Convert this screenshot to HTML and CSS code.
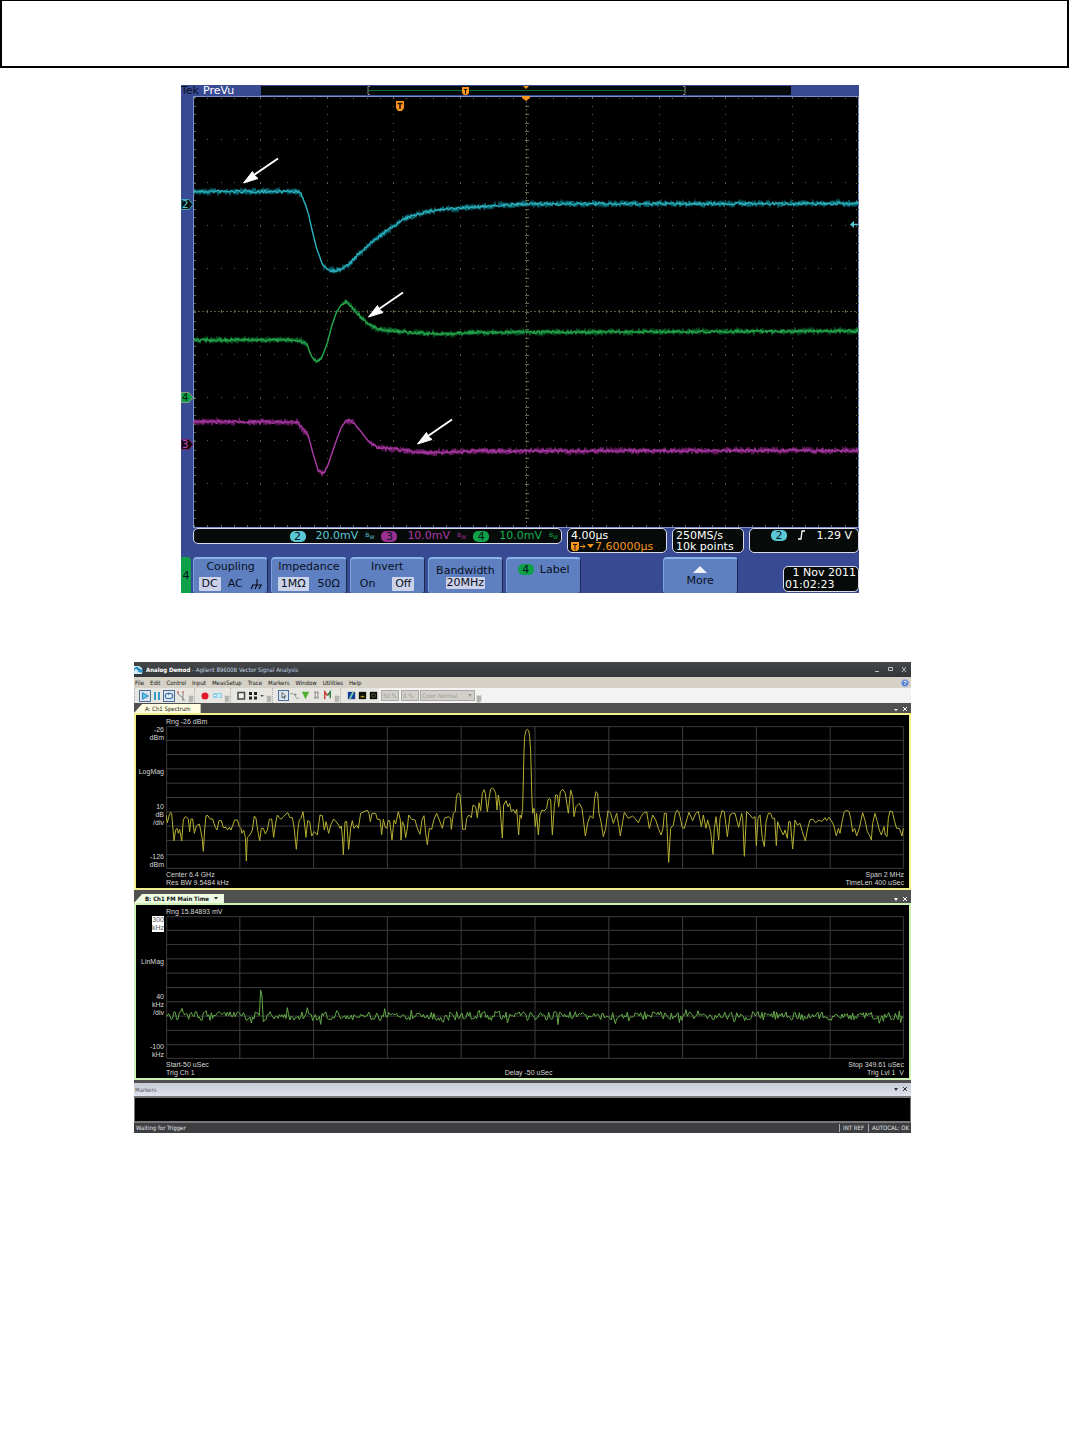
FILE: index.html
```html
<!DOCTYPE html>
<html lang="en">
<head>
<meta charset="utf-8">
<title>Instrument captures</title>
<link rel="stylesheet" href="styles.css">
</head>
<body>
<header class="banner"></header>
<main>
<section class="scope" aria-label="Oscilloscope">
  <div class="scope-top">
    <b class="tek">Tek</b><span class="state">PreVu</span>
    <div class="record">
      <svg viewBox="0 0 530 9" preserveAspectRatio="none">
        <path d="M107 4.500H424" stroke="#0b6b35"/>
        <path d="M109 .5H107V8.500H109M422 .5H424V8.500H422" fill="none" stroke="#8a8482"/>
        <path d="M201 1H208V7L206 9H203L201 7Z" fill="#f7941e"/>
        <path d="M203 3.500H206M204.500 3V8" stroke="#201000"/>
        <path d="M262 0H268L265 3Z" fill="#f7941e"/>
      </svg>
    </div>
  </div>
  <svg class="scope-plot" viewBox="0 0 678 432">
    <rect width="678" height="432" fill="#394a94"/>
    <rect x="12.500" y=".5" width="665" height="431" fill="#000" stroke="#7b93cf"/>
    <g id="graticule"></g>
    <g id="traces"></g>
    <path d="M341 0H349V2L345 5L341 2Z" fill="#f7941e"/>
    <path d="M215 5H223V12L221 15H217L215 12Z" fill="#f7941e"/>
    <path d="M216.500 7.500H221.500M219 7V13" stroke="#201000" stroke-width="1.500"/>
    <path d="M677 128.500H672" stroke="#5bc8d8" stroke-width="1.500"/><path d="M669 128.500L673 125V132Z" fill="#5bc8d8"/>
    <g fill="#fff" stroke="#fff">
      <g id="arrow"><path d="M97 62.500L73 79" stroke-width="2"/><path d="M62.500 87L71.500 75.500L73 79L77 82.500Z"/></g>
      <use href="#arrow" x="125" y="134"/>
      <use href="#arrow" x="174" y="261"/>
    </g>
    <g class="ch">
      <path d="M0 103.500H8L12 108.500L8 113.500H0Z" fill="#0a1416" stroke="#3ea9b9"/><text x="1" y="112" fill="#5bc8d8">2</text>
      <path d="M0 296.500H8L12 301.500L8 306.500H0Z" fill="#0fa14a" stroke="#8a9a80"/><text x="1" y="305" fill="#03200c">4</text>
      <path d="M0 343.500H8L12 348.500L8 353.500H0Z" fill="#14060f" stroke="#7a2470"/><text x="1" y="352" fill="#c050b8">3</text>
    </g>
  </svg>
  <div class="readouts">
    <div class="box channels">
      <span class="pill cyan">2</span><span class="c-cyan">20.0mV</span><small class="c-cyan">B<sub>W</sub></small>
      <span class="pill purple">3</span><span class="c-purple">10.0mV</span><small class="c-purple">B<sub>W</sub></small>
      <span class="pill green">4</span><span class="c-green">10.0mV</span><small class="c-green">B<sub>W</sub></small>
    </div>
    <div class="box time"><div>4.00µs</div>
      <div class="delay"><svg width="24" height="9" viewBox="0 0 24 9"><path d="M0 0H8V7L6 9H2L0 7Z" fill="#f7941e"/><path d="M2 2.500H6M4 2V8" stroke="#201000"/><path d="M9 4.500H14M12 2.500L14 4.500L12 6.500" fill="none" stroke="#f7941e"/><path d="M16 2H23L19.500 6Z" fill="#f7941e"/></svg>7.60000µs</div></div>
    <div class="box rate"><div>250MS/s</div><div>10k points</div></div>
    <div class="box trigger"><span class="pill cyan">2</span>
      <svg width="10" height="10" viewBox="0 0 10 10"><path d="M1 9H4L5 1H8" fill="none" stroke="#fff" stroke-width="1.300"/></svg><span>1.29 V</span></div>
  </div>
  <div class="softkeys">
    <span class="tab4">4</span>
    <button class="key"><span>Coupling</span><span class="opts"><mark>DC</mark><i>AC</i><svg width="13" height="11" viewBox="0 0 13 11"><path d="M7 0V6M2 6H12M3 6L1 10M7 6L5 10M11 6L9 10" fill="none" stroke="#0a1024" stroke-width="1.200"/></svg></span></button>
    <button class="key"><span>Impedance</span><span class="opts"><mark>1MΩ</mark><i>50Ω</i></span></button>
    <button class="key"><span>Invert</span><span class="opts"><i>On</i><mark>Off</mark></span></button>
    <button class="key mid"><span>Bandwidth</span><mark>20MHz</mark></button>
    <button class="key label"><span class="pill green">4</span><span>Label</span></button>
    <span></span>
    <button class="key more"><svg width="14" height="7" viewBox="0 0 14 7"><path d="M7 0L14 7H0Z" fill="#eef0fa"/></svg><span>More</span></button>
    <div class="box date"><div>1 Nov 2011</div><div>01:02:23</div></div>
  </div>
</section>

<section class="vsa" aria-label="Vector signal analysis">
  <div class="title">
    <svg width="9" height="10" viewBox="0 0 9 10"><path d="M0 1H5L8 3V9H0Z" fill="#cfeaf5"/><path d="M0 4Q2 0 5 3T9 4V7Q6 10 4 6T0 6Z" fill="#2b8fc4"/><path d="M4 8H8" stroke="#e8f4fa"/></svg>
    <span class="name"><b>Analog Demod</b> - Agilent 89600B Vector Signal Analysis</span>
    <svg class="winbtns" width="31" height="7" viewBox="0 0 31 7"><path d="M0 5.500H4M13.500 1.500H17.500V4.500H13.500ZM27 1L31 6M31 1L27 6" fill="none" stroke="#c0c0c0"/></svg>
  </div>
  <nav class="menu">
    <a href="#">File</a><a href="#">Edit</a><a href="#">Control</a><a href="#">Input</a><a href="#">MeasSetup</a><a href="#">Trace</a><a href="#">Markers</a><a href="#">Window</a><a href="#">Utilities</a><a href="#">Help</a>
    <svg class="help" width="8" height="8" viewBox="0 0 8 8"><circle cx="4" cy="4" r="3.500" fill="#4a72c8" stroke="#9db4e4"/><path d="M2.500 3Q4 1 5.500 3L4 4.500V6" fill="none" stroke="#fff"/></svg>
  </nav>
  <div class="toolbar">
    <div class="group">
      <button class="on" aria-label="Run"><svg viewBox="0 0 12 12"><path d="M3 2L10 6L3 10Z" fill="#5fc4ee" stroke="#1c78b8"/></svg></button>
      <button aria-label="Pause"><svg viewBox="0 0 12 12"><path d="M4 2V10M8 2V10" stroke="#3a9cc4" stroke-width="2"/></svg></button>
      <button class="on" aria-label="Repeat"><svg viewBox="0 0 12 12"><rect x="1.500" y="3" width="9" height="6" rx="3" fill="#dcebf8" stroke="#3a6ea8" stroke-width="1.300"/><path d="M5 1.500L8 3L5 5" fill="#3a6ea8"/></svg></button>
      <button aria-label="Sweep"><svg viewBox="0 0 12 12"><path d="M3 2V4L8 8V10M8 2V10M7 10H10" fill="none" stroke="#8a8a8a"/><path d="M2 2H4M7 2H9" stroke="#c44"/></svg></button>
      <span class="chip"></span>
    </div>
    <div class="group">
      <button aria-label="Record"><svg viewBox="0 0 12 12"><circle cx="6" cy="6" r="3.500" fill="#e0182c"/></svg></button>
      <button aria-label="Playback"><svg viewBox="0 0 12 12"><rect x="2" y="3" width="9" height="5" fill="#8ed0ea"/><path d="M3 5.500H5M7 4V8M9 4V7" stroke="#fff"/></svg></button>
      <span class="chip"></span>
    </div>
    <div class="group">
      <button aria-label="Single"><svg viewBox="0 0 12 12"><rect x="3" y="2.500" width="6.500" height="6.500" fill="#eee" stroke="#444" stroke-width="1.500"/></svg></button>
      <button aria-label="Grid"><svg viewBox="0 0 12 12"><path d="M2 2H5V5H2ZM7 2H10V5H7ZM2 6.500H5V9.500H2ZM7 6.500H10V9.500H7Z" fill="#222"/></svg></button>
      <button class="caret" aria-label="Layouts"><svg viewBox="0 0 6 12"><path d="M1 5H5L3 7Z" fill="#555"/></svg></button>
      <span class="chip"></span>
    </div>
    <div class="group tight">
      <button class="on" aria-label="Pointer"><svg viewBox="0 0 12 12"><path d="M4 2V9L6 7.500L7 10L8 9.500L7 7H9Z" fill="#fff" stroke="#234"/></svg></button>
      <button aria-label="Curve"><svg viewBox="0 0 12 12"><path d="M1 4H4Q7 4 8 9H11" fill="none" stroke="#999"/><path d="M6 4H8V6H6Z" fill="#888"/></svg></button>
      <button aria-label="Marker"><svg viewBox="0 0 12 12"><path d="M2 2H10L6 10Z" fill="#4cb02c"/></svg></button>
      <button aria-label="Band"><svg viewBox="0 0 12 12"><path d="M4.500 1V10M7.500 1V10M4 3H8M4 8H8" stroke="#888"/></svg></button>
      <button aria-label="Peak"><svg viewBox="0 0 12 12"><path d="M3 10V2L6 6" fill="none" stroke="#c33" stroke-width="1.500"/><path d="M6 6L9 2V9" fill="none" stroke="#287a3a" stroke-width="1.500"/></svg></button>
      <span class="chip"></span>
    </div>
    <div class="group tight">
      <button aria-label="Spectrogram"><svg viewBox="0 0 12 12"><path d="M2 2H10V10H2Z" fill="#123a9a"/><path d="M4 10L8 2" stroke="#7fc8a0" stroke-width="2"/></svg></button>
      <button aria-label="Density"><svg viewBox="0 0 12 12"><path d="M2 2H10V10H2Z" fill="#0c1005"/><path d="M3 8H9L6 6Z" fill="#c8a828"/></svg></button>
      <button aria-label="Persistence"><svg viewBox="0 0 12 12"><path d="M2 2H10V10H2Z" fill="#090909"/><circle cx="6" cy="6" r="2" fill="none" stroke="#6a6a40"/></svg></button>
    </div>
    <input class="pct" aria-label="Upper percent" value="50 %" disabled>
    <input class="pct" aria-label="Lower percent" value="0 %" disabled>
    <span class="pick"><select aria-label="Color map" disabled><option>Color Normal</option></select></span>
    <span class="chip"></span>
  </div>

  <div class="strip"><span class="tab yellow">A: Ch1 Spectrum</span><svg class="panebtns" width="13" height="6" viewBox="0 0 13 6"><path d="M0 3H4L2 5Z" fill="#fff"/><path d="M9 1L13 5M13 1L9 5" stroke="#fff"/></svg></div>
  <div class="pane pane-yellow">
    <div class="range">Rng -26 dBm</div>
    <div class="axis"><span>-26<br>dBm</span><span>LogMag</span><span>10<br>dB<br>/div</span><span>-126<br>dBm</span></div>
    <svg class="graph" viewBox="0 0 2214 429">
      <g class="grid"></g>
      <g class="spectrum">
        <polyline transform="translate(-108 72)" points="108,195 112,218 118,195 122,187 125,190 128,225 132,272 137,240 141,235 145,250 149,238 155,273 160,210 164,202 168,200 175,207 179,245 183,207 188,207 193,250 199,228 208,222 212,240 216,262 220,304 224,240 228,197 234,197 240,207 248,207 256,232 261,240 267,212 274,212 280,233 288,232 293,240 298,232 303,240 314,210 322,210 328,230 333,235 336,250 341,240 346,262 349,333 352,262 360,255 367,240 373,198 378,205 383,240 389,272 394,235 400,235 406,252 412,240 418,208 425,207 431,262 436,225 442,195 448,203 453,208 460,200 473,188 480,203 487,203 492,230 499,298 504,235 508,210 513,205 519,185 524,225 528,262 533,212 539,215 545,258 553,245 562,255 570,195 577,197 583,240 588,215 596,250 602,225 611,207 618,215 626,225 630,235 634,228 637,260 640,314 645,215 650,215 656,298 662,235 667,212 672,235 680,225 685,235 692,190 702,185 712,181 717,190 721,215 726,190 737,190 742,208 750,208 755,254 760,208 766,232 771,235 774,212 779,212 786,270 792,210 797,222 805,185 811,210 813,270 817,215 822,225 827,263 832,235 836,195 845,208 855,210 862,235 870,253 876,210 882,197 887,250 892,285 898,235 905,238 912,208 920,190 928,210 937,235 943,205 955,200 962,205 964,238 970,190 976,185 979,145 982,132 986,129 990,135 994,180 998,238 1006,238 1010,205 1017,195 1024,203 1029,165 1037,170 1042,203 1047,158 1052,182 1057,130 1062,119 1066,130 1072,185 1078,140 1082,117 1087,114 1092,118 1097,130 1101,180 1105,135 1110,170 1117,264 1121,165 1128,152 1134,170 1139,160 1144,185 1150,178 1156,190 1160,178 1166,255 1170,195"/>
        <polyline transform="translate(1062 -213)" points="0,480 4,490 8,460 12,290 14,245 18,226 22,223 26,227 29,245 32,290 36,440 38,475 42,460 46,515 50,475 55,540 60,480 66,465 72,468 80,460 84,435 88,430 92,435 97,540 103,455 107,420 112,420 116,455 121,410 129,403 136,415 145,475 152,405 158,425 162,485 168,455 178,445 186,460 196,543 204,500 211,482 219,490 224,430 228,410 233,415 237,475 243,500 250,545 257,520 264,467 272,475 280,505 290,475 296,510 301,543 308,500 313,472 325,490 338,483 345,490 355,503 363,485 370,475 380,470 388,520 398,480 407,495 415,520 423,540 429,520 433,475 439,475 446,622 452,520 460,510 466,475 471,466 476,470 480,485 487,518 493,520 500,495 507,472 518,497 527,475 535,470 544,515 550,480 558,520 563,495 572,530 579,598 583,520 588,485 596,555 600,490 606,467 613,470 622,545 630,480 637,475 645,475 656,517 665,475 668,490 673,604 680,470 690,480 698,490 705,485 709,572 714,490 720,480 727,550 733,575 738,500 745,475 752,475 757,490 764,490 769,572 773,500 780,520 790,540 795,525 802,550 806,500 811,500 818,582 825,495 832,510 840,505 847,530 856,558 863,520 870,495 878,492 887,503 897,495 905,500 915,488 920,497 927,487 934,497 941,510 949,543 955,520 960,535 966,500 973,470 980,466 987,470 992,490 998,530 1004,520 1010,543 1018,520 1028,473 1036,500 1042,530 1048,540 1054,555 1058,505 1065,475 1072,500 1078,525 1084,540 1092,515 1096,540 1101,545 1105,490 1110,468 1117,470 1124,500 1130,520 1138,520 1146,543 1150,520"/>
      </g>
    </svg>
    <div class="foot"><span>Center 6.4 GHz<br>Res BW 9.5484 kHz</span><span class="right">Span 2 MHz<br>TimeLen 400 uSec</span></div>
  </div>
  <div class="strip lower"><span class="tab mint"><b>B: Ch1 FM Main Time</b><svg width="4" height="3" viewBox="0 0 4 3"><path d="M0 0H4L2 2.500Z" fill="#222"/></svg></span><svg class="panebtns" width="13" height="6" viewBox="0 0 13 6"><path d="M0 2H4L2 5Z" fill="#fff"/><path d="M9 1L13 5M13 1L9 5" stroke="#fff"/></svg></div>
  <div class="pane pane-mint">
    <div class="range">Rng 15.84893 mV</div>
    <div class="axis"><span class="sel">300<br>kHz</span><span>LinMag</span><span>40<br>kHz<br>/div</span><span>-100<br>kHz</span></div>
    <svg class="graph" viewBox="0 0 2214 429">
      <g class="grid"></g>
      <g id="fm"></g>
    </svg>
    <div class="foot"><span>Start-50 uSec<br>Trig Ch 1</span><span class="center"><br>Delay -50 uSec</span><span class="right">Stop 349.61 uSec<br>Trig Lvl 1&nbsp; V</span></div>
  </div>
  <div class="markers-bar"><span>Markers</span><svg class="panebtns" width="13" height="6" viewBox="0 0 13 6"><path d="M0 2H4L2 5Z" fill="#333"/><path d="M9 1L13 5M13 1L9 5" stroke="#333"/></svg></div>
  <div class="markers-body"></div>
  <div class="status"><span>Waiting for Trigger</span><span class="cell first">INT REF</span><span class="cell">AUTOCAL: OK</span></div>
</section>
</main>
<script src="script.js"></script>
</body>
</html>
```
FILE: styles.css
```css
* { box-sizing: border-box; }
body { margin: 0; background: #fff; font-family: "DejaVu Sans", sans-serif; }
svg { display: block; flex: none; }
button { font: inherit; color: inherit; border: 0; padding: 0; margin: 0; }

.banner { height: 68px; border: 2px solid #000; border-top-width: 1px; }

/* Oscilloscope */
.scope { margin: 17px 210px 0 181px; background: #394a94; font-size: 11px; line-height: 12px; color: #fff; }
.scope-top { display: flex; height: 11px; align-items: center; overflow: hidden; }
.tek { width: 22px; color: #0a0f20; font-weight: 400; }
.state { width: 58px; }
.record { flex: 1; margin-right: 68px; height: 9px; background: #060a08; }
.record svg { width: 100%; height: 9px; }
.scope-plot { width: 100%; height: auto; }
.ch { font-size: 10px; }
.box { background: #060a08; border: 1px solid #d8dcec; border-radius: 5px; }
.readouts { display: flex; gap: 5px; padding-left: 12px; align-items: flex-start; }
.channels { flex: 370; height: 16px; display: flex; align-items: center; justify-content: flex-end; gap: 7px; padding-right: 3px; }
.channels .pill { margin-right: 3px; }
.time, .rate { height: 25px; padding: 1px 0 0 3px; line-height: 11px; white-space: nowrap; }
.time { flex: 0 0 100px; }
.delay { display: flex; align-items: center; color: #f7941e; }
.rate { flex: 0 0 72px; }
.trigger { flex: 0 0 110px; height: 25px; padding: 1px 6px 0 21px; display: flex; justify-content: space-between; align-items: flex-start; }
.pill { display: inline-block; width: 16px; height: 11px; line-height: 11px; border-radius: 5px; text-align: center; color: #04141a; }
.cyan { background: #5bc8d8; }
.purple { background: #99308f; }
.green { background: #0fa14a; }
.c-cyan { color: #5bc8d8; }
.c-purple { color: #b03aa6; }
.c-green { color: #0fb050; }
.channels small { font-size: 6px; }
.channels sub { font-size: 5px; }
.softkeys { display: grid; grid-template-columns: 9px repeat(7, minmax(0, 301fr)) 473fr; column-gap: 3px; height: 36px; margin-top: 4px; color: #0a1024; }
.tab4 { background: #0fa14a; border-radius: 0 4px 0 0; padding-top: 13px; text-align: center; width: 10px; }
.key { background: #5e80c0; border-top: 2px solid #8db4e6; border-left: 1px solid #7da3dc; border-right: 1px solid #1c2650; border-radius: 4px 4px 3px 3px; display: flex; flex-direction: column; align-items: center; justify-content: space-between; padding: 2px 1px; line-height: 12px; }
.date div { line-height: 12px; }
.key mark { background: #ccd2ea; color: #0a1024; padding: 1px 3px; border-radius: 1px; }
.key i { font-style: normal; }
.opts { display: flex; align-items: center; justify-content: space-around; align-self: stretch; }
.key.mid { justify-content: flex-end; padding-bottom: 4px; }
.key.mid mark { padding: 0 1px; }
.key.label { flex-direction: row; justify-content: center; align-items: flex-start; gap: 6px; padding-top: 5px; }
.key.more { justify-content: flex-start; gap: 2px; padding-top: 7px; }
.date { justify-self: end; width: 76px; height: 26px; margin-top: 9px; color: #fff; padding: 0 2px 0 1px; white-space: nowrap; }
.date div:first-child { text-align: right; }

/* Signal analyser window */
.vsa { margin: 69px 158px 0 134px; background: #505050; font-family: "DejaVu Sans Condensed", "DejaVu Sans", sans-serif; font-stretch: condensed; font-size: 6px; line-height: 8px; color: #111; }
.title { display: flex; align-items: center; height: 15px; background: linear-gradient(#45484b, #333638); color: #c4d4e6; gap: 3px; }
.title b { color: #fff; }
.title .winbtns { margin: 0 5px 0 auto; }
.menu { display: flex; align-items: center; gap: 6px; height: 11px; background: #d5d1c7; padding: 1px 2px 0 1px; }
.menu a { color: #111; text-decoration: none; }
.help { margin-left: auto; }
.toolbar { display: flex; align-items: center; height: 15px; background: #f3f3f3; }
.group { display: flex; align-items: center; padding-left: 4px; height: 15px; background: #e8e6e0; border-left: 1px dotted #aaa; }
.group.tight { padding-left: 5px; }
.toolbar button { width: 12px; height: 12px; background: none; }
.toolbar button svg { width: 100%; height: 100%; }
.toolbar .tight button { width: 11px; height: 11px; }
.toolbar button.on { border: 1px solid #4a6f9c; background: #dde4ec; }
.toolbar button.caret { width: 6px; }
.chip { width: 6px; height: 8px; margin-left: 1px; align-self: flex-end; background: #b5b3ad; border-radius: 0 0 3px 0; border: 1px solid #dcdad4; }
.pct, .pick select { height: 11px; font: inherit; color: #999; background: #d3d0c9; border: 1px solid #aaa8a2; border-radius: 0; padding: 0 1px; margin: 0; appearance: none; opacity: 1; }
.pct { width: 18px; margin-left: 2px; }
.pick { position: relative; margin-left: 1px; }
.pick select { display: block; width: 55px; }
.pick::after { content: ""; position: absolute; right: 3px; top: 4px; border: 2px solid transparent; border-top: 3px solid #999; }
.strip { display: flex; align-items: flex-end; height: 10px; }
.strip.lower { height: 13px; }
.panebtns { margin: 0 4px 1px auto; }
.tab { height: 9px; line-height: 9px; padding: 0 10px 0 11px; display: flex; align-items: center; gap: 5px; clip-path: polygon(0 100%, 8px 0, 100% 0, 100% 100%); }
.tab svg { margin-right: -4px; }
.yellow { background: #fffde0; }
.mint { background: #ecfbe2; }
.pane { display: grid; grid-template-columns: 28px minmax(0, 1fr); column-gap: 2px; grid-template-rows: 11px auto auto; padding: 0 5px 1px 0; background: #000; border: 2px solid; color: #d8d8d8; font: 7px/8px "Liberation Sans", sans-serif; }
.pane-yellow { border-color: #f2ee8e; }
.pane-mint { border-color: #cdf3b4; }
.range { grid-column: 2; padding-top: 3px; }
.axis { display: flex; flex-direction: column; justify-content: space-between; align-items: flex-end; text-align: right; }
.axis .sel { background: #fff; color: #555; }
.graph { width: 100%; height: auto; background: #000; }
.grid path { fill: none; stroke: #3c3c3c; stroke-width: 3; }
.spectrum { fill: none; stroke: #b5b032; stroke-width: 3; stroke-linejoin: round; }
.foot { grid-column: 2; display: flex; justify-content: space-between; padding-top: 2px; }
.right { text-align: right; }
.markers-bar { display: flex; align-items: center; height: 13px; margin-top: 3px; padding-left: 1px; background: linear-gradient(#c6ccd8, #e0e2ec); color: #555; }
.markers-body { height: 27px; background: #000; border: 2px solid #777; border-width: 2px 1px; }
.status { display: flex; align-items: center; height: 10px; background: #3c3e42; color: #e4e4e4; padding-left: 2px; }
.cell { border-left: 1px solid #aaa; padding: 0 2px 0 3px; }
.cell.first { margin-left: auto; padding-right: 4px; }
```
FILE: script.js
```js
const NS = "http://www.w3.org/2000/svg";
let seed = 7;
const rand = () => (seed = (seed * 16807) % 2147483647) / 2147483647 * 2 - 1;

function path(parent, d, stroke, width) {
  const p = document.createElementNS(NS, "path");
  p.setAttribute("d", d);
  p.setAttribute("fill", "none");
  if (stroke) p.setAttribute("stroke", stroke);
  if (width) p.setAttribute("stroke-width", width);
  parent.appendChild(p);
}

// Dotted graticule: ten divisions by ten, five ticks per division
const grat = document.getElementById("graticule");
let dots = "", axis = "";
for (let i = 0; i <= 10; i++) {
  const x = Math.round(13 + i * 66.4), y = 1 + i * 43;
  for (let k = 0; k < 50; k++) {
    const yy = Math.round(1 + k * 8.6), xx = Math.round(13 + k * 13.28);
    dots += `M${x} ${yy + .5}h1`;
    if (i > 0 && i < 10) dots += `M${xx} ${y - .5}h1`;
  }
}
for (let k = 0; k < 50; k++) {
  const xx = Math.round(13 + k * 13.28), yy = Math.round(1 + k * 8.6);
  axis += `M${xx + .5} 214v3M${xx + .5} 2v1M${xx + .5} 429v2M344 ${yy + .5}h4M14 ${yy + .5}h1M675 ${yy + .5}h1`;
}
path(grat, dots, "#5c5c48");
path(grat, axis, "#6a6a50");
path(grat, "M13 215.500H677M345.500 1V431", "#55553e");
grat.lastChild.setAttribute("stroke-dasharray", "2 2");

const traces = [
  { dim: "#0b6a74", lit: "#2fb4c0", amp: 3.4, pts: [[13,95.500],[117,95.500],[121,100],[125,110],[128,120],[131,134],[136,154],[141,167],[146,173],[153,175],[161,173],[168,168],[182,154],[195,143],[207,134],[217,127],[226,122],[240,117],[256,114],[280,112],[310,110],[345,108],[677,107.500]] },
  { dim: "#0d6a2c", lit: "#28a850", amp: 2.8, pts: [[13,244],[117,244],[121,246],[126,248],[129,257],[133,264],[136,266],[141,261],[146,248],[151,229],[156,215],[161,208],[165,206],[169,209],[177,218],[186,227],[196,233],[211,234.500],[227,236.500],[261,238],[287,236.500],[677,235]] },
  { dim: "#701e6c", lit: "#a83ca3", amp: 3.6, pts: [[13,326],[116,326],[122,333],[127,339],[132,357],[137,374],[141,378],[146,372],[152,354],[160,332],[164,326],[168,324],[172,326],[181,337],[189,347],[196,351],[211,353],[227,355],[247,357],[294,355],[677,354.500]] }
];
const host = document.getElementById("traces");
for (const t of traces) {
  let dim = "", lit = "", s = 0;
  for (let x = 13; x <= 677; x += 1) {
    while (x > t.pts[s + 1][0]) s++;
    const [x0, y0] = t.pts[s], [x1, y1] = t.pts[s + 1];
    const y = y0 + (y1 - y0) * (x - x0) / (x1 - x0);
    const quiet = Math.abs((y1 - y0) / (x1 - x0)) > 1.2 ? .3 : 1;
    const c = dim ? "L" : "M";
    const swing = (x % 2 ? 1 : -1) * Math.abs(rand());
    dim += `${c}${x} ${(y + swing * t.amp * quiet).toFixed(1)}`;
    lit += `${c}${x} ${(y + rand() * 1.5 * quiet).toFixed(1)}`;
  }
  path(host, dim, t.dim, 1.3);
  path(host, lit, t.lit, 1.2);
}

// Analyser grids
for (const g of document.querySelectorAll(".grid")) {
  let d = "M2 2H2212V427H2Z";
  for (let i = 1; i < 10; i++) d += `M${i * 221.4} 0V429M0 ${i * 42.9}H2214`;
  path(g, d);
}

// Demodulated FM trace with one burst
let fm = "M0 300";
for (let x = 4; x <= 2212; x += 4) {
  let y = 300 + rand() * 13 + (rand() > .6 ? rand() * 16 : 0);
  if (x === 284) y = 222;
  if (x === 288) y = 240;
  if (x === 292) y = 318;
  fm += `L${x} ${y.toFixed(0)}`;
}
path(document.getElementById("fm"), fm, "#62a848", 3);
```
